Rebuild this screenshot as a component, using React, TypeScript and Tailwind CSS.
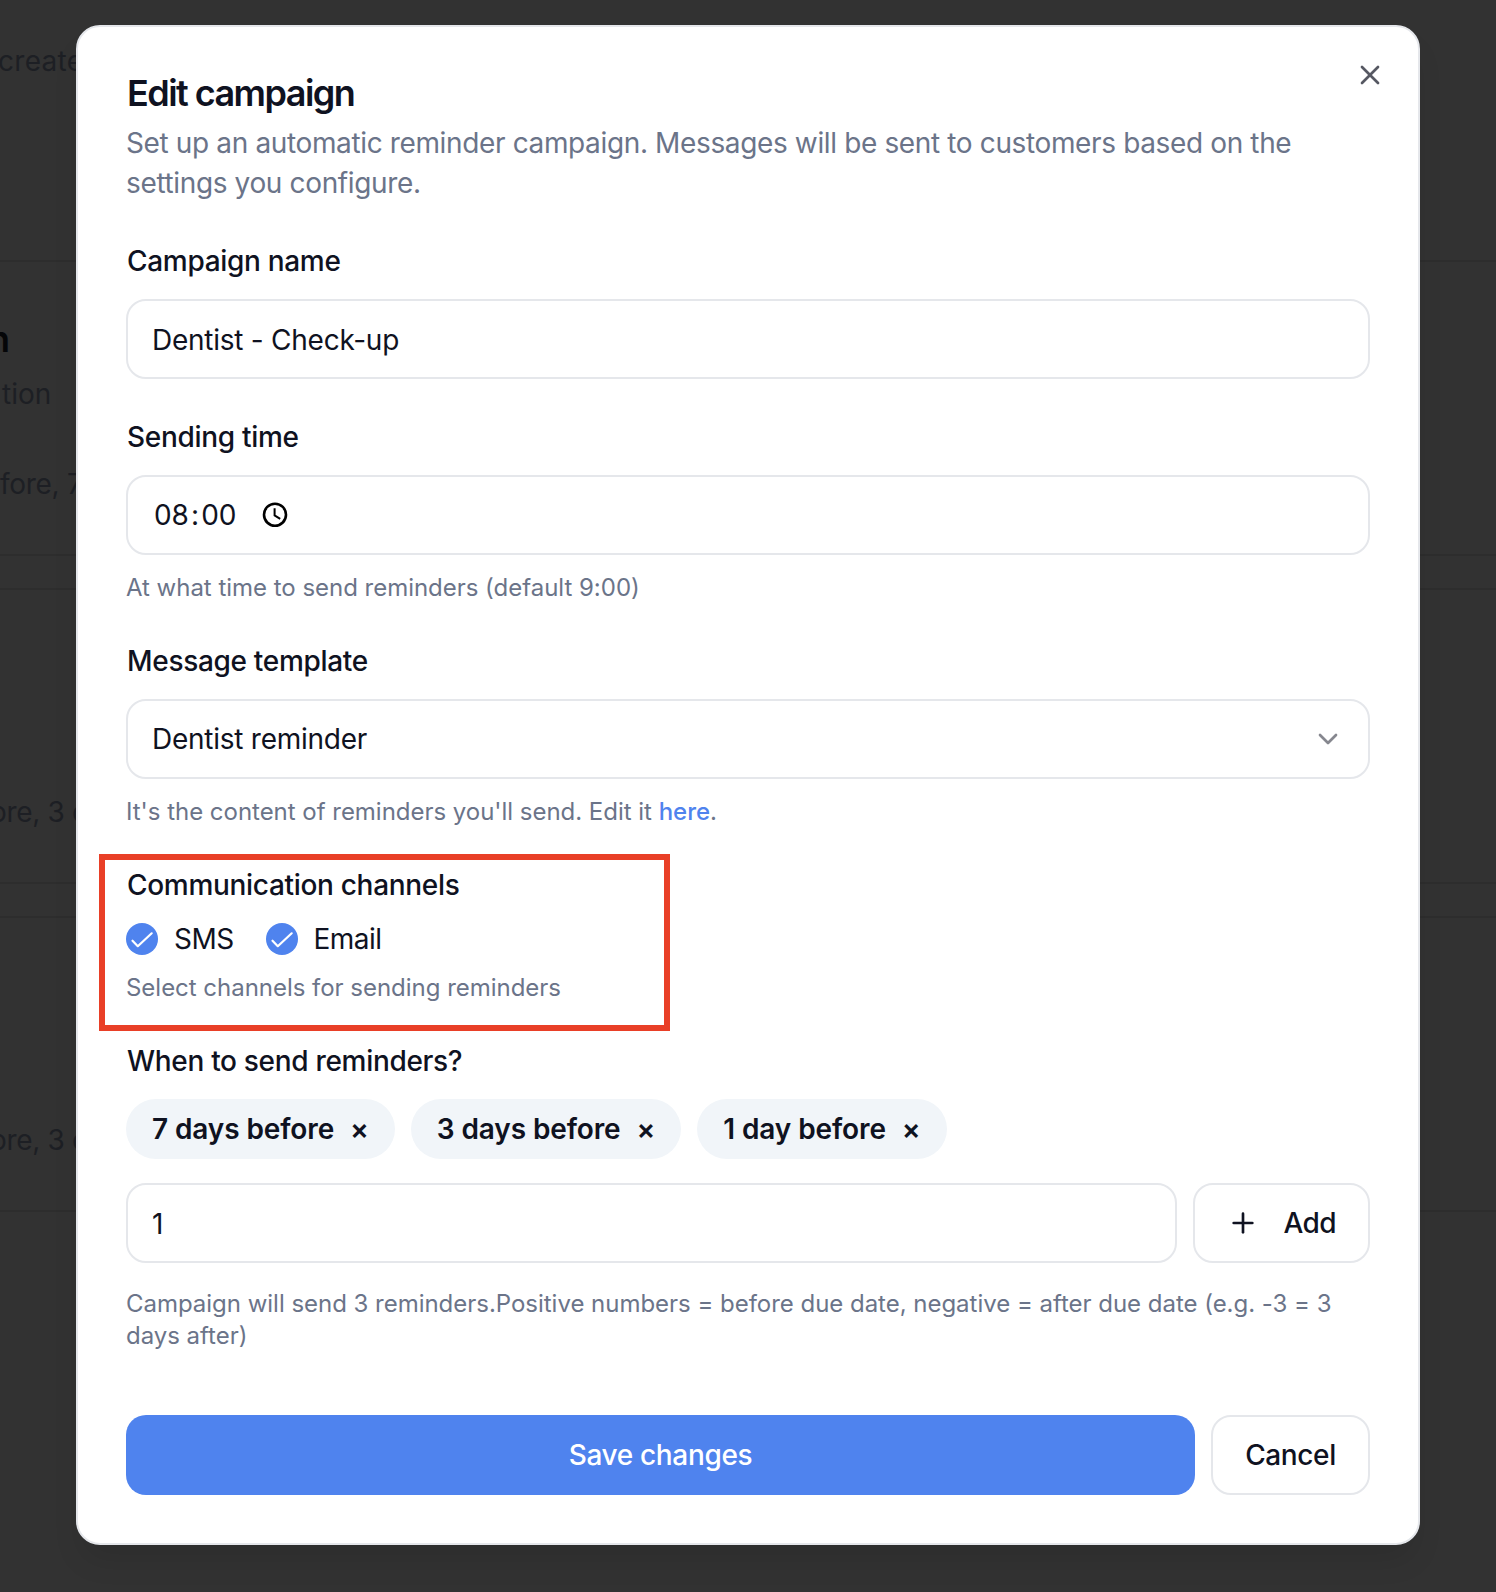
import { useState } from 'react';
import type { ReactNode } from 'react';
import { ChevronDown, Plus, X } from 'lucide-react';

type Channel = 'SMS' | 'Email';

const controlClass =
  'h-20 w-full rounded-[20px] border-2 border-[#e5e7eb] bg-white px-6 text-[28px] tracking-[-0.009em] text-[#0f1221] outline-none';

const hintClass = 'pt-px text-2xl leading-8 tracking-[-0.001em] text-[#6b7489]';

function reminderLabel(days: number): string {
  return `${days} ${days === 1 ? 'day' : 'days'} before`;
}

function Field({ label, hint, children }: { label: string; hint?: ReactNode; children: ReactNode }) {
  return (
    <div className="flex flex-col gap-4">
      <label className="h-12 pt-0.5 pl-px text-[28px] leading-[48px] font-medium tracking-[-0.011em] text-[#0f1221]">
        {label}
      </label>
      {children}
      {hint && <p className={`h-8 ${hintClass}`}>{hint}</p>}
    </div>
  );
}

function ClockIcon() {
  return (
    <svg width="26" height="26" viewBox="0 0 26 26" fill="none" stroke="#000" strokeWidth="2.6">
      <circle cx="13" cy="12.7" r="11" />
      <path d="M12.6 6.2v7.2l5.6 3.4" strokeWidth="2" />
    </svg>
  );
}

function ChannelOption({ name, checked, onToggle }: { name: Channel; checked: boolean; onToggle: () => void }) {
  return (
    <button type="button" onClick={onToggle} className="flex h-8 items-center gap-4">
      <span
        className={`flex size-8 items-center justify-center rounded-full ${
          checked ? 'bg-[#4f83ee]' : 'border-2 border-[#4f83ee]'
        }`}
      >
        {checked && (
          <svg width="32" height="32" viewBox="0 0 32 32" fill="none" stroke="#fff" strokeWidth="2.2">
            <path d="M6.5 17.7l5.3 5.5L25.7 10.3" strokeLinecap="round" strokeLinejoin="round" />
          </svg>
        )}
      </span>
      <span className="text-[28px] leading-8 tracking-[-0.02em] text-[#0f1221]">{name}</span>
    </button>
  );
}

// The page that stays visible behind the overlay
function Backdrop() {
  return (
    <div className="absolute inset-0 overflow-hidden bg-[#323232] text-[28px] leading-10 text-[#1d1f24]">
      <p className="absolute top-[41px] -left-0.5 tracking-[0.01em]">create</p>
      <div className="absolute top-[260px] -left-6 h-[296px] w-[1600px] border-2 border-[#2d2d2d]" />
      <div className="absolute top-[588px] -left-6 h-[296px] w-[1600px] border-2 border-[#2d2d2d]" />
      <div className="absolute top-[916px] -left-6 h-[296px] w-[1600px] border-2 border-[#2d2d2d]" />
      <p className="absolute top-[319px] -left-3 text-[36px] font-semibold text-[#050608]">n</p>
      <p className="absolute top-[374px] left-0.5">tion</p>
      <p className="absolute top-[464px] left-0 tracking-[-0.01em] whitespace-nowrap">fore, 7</p>
      <p className="absolute top-[792px] -left-2.5 tracking-[-0.012em] whitespace-nowrap">ore, 3 d</p>
      <p className="absolute top-[1120px] -left-2.5 tracking-[-0.012em] whitespace-nowrap">ore, 3 d</p>
    </div>
  );
}

export default function App() {
  const [name, setName] = useState('Dentist - Check-up');
  const [channels, setChannels] = useState<Channel[]>(['SMS', 'Email']);
  const [reminders, setReminders] = useState([7, 3, 1]);
  const [days, setDays] = useState('1');

  const toggleChannel = (channel: Channel) => {
    setChannels((prev) => (prev.includes(channel) ? prev.filter((c) => c !== channel) : [...prev, channel]));
  };

  const addReminder = () => {
    const value = Number(days);
    if (!Number.isNaN(value) && !reminders.includes(value)) setReminders([...reminders, value]);
  };

  return (
    <div className="relative h-[1592px] w-[1496px] overflow-hidden font-['Inter',sans-serif]">
      <Backdrop />

      <div className="relative mt-[25px] ml-[76px] flex h-[1520px] w-[1344px] flex-col rounded-3xl border-2 border-[#e5e7eb] bg-white p-12 shadow-[0_20px_30px_-6px_rgba(0,0,0,0.1)]">
        <button type="button" aria-label="Close" className="absolute top-8 right-8 text-[#0f1221] opacity-70">
          <X size={32} />
        </button>

        <div className="flex flex-col gap-3">
          <h2 className="pl-px text-4xl leading-none font-semibold tracking-[-0.043em] text-[#0f1221]">
            Edit campaign
          </h2>
          <p className="text-[28px] leading-10 tracking-[-0.013em] text-[#6b7489]">
            Set up an automatic reminder campaign. Messages will be sent to customers based on the settings you
            configure.
          </p>
        </div>

        <div className="mt-8 flex flex-col gap-8">
          <Field label="Campaign name">
            <input className={`${controlClass} pt-0.5`} value={name} onChange={(e) => setName(e.target.value)} />
          </Field>

          <Field label="Sending time" hint="At what time to send reminders (default 9:00)">
            <div className={`${controlClass} flex items-center gap-[26px]`}>
              <span className="flex pl-0.5">
                08<span className="px-[2.5px]">:</span>00
              </span>
              <ClockIcon />
            </div>
          </Field>

          <Field
            label="Message template"
            hint={
              <>
                It's the content of reminders you'll send. Edit it{' '}
                <a href="#" className="font-medium text-[#4f83ee]">
                  here
                </a>
                .
              </>
            }
          >
            <button type="button" className={`${controlClass} flex items-center justify-between`}>
              Dentist reminder
              <ChevronDown size={32} className="opacity-50" />
            </button>
          </Field>

          <div className="relative">
            <Field label="Communication channels" hint="Select channels for sending reminders">
              <div className="flex gap-8">
                {(['SMS', 'Email'] as const).map((channel) => (
                  <ChannelOption
                    key={channel}
                    name={channel}
                    checked={channels.includes(channel)}
                    onToggle={() => toggleChannel(channel)}
                  />
                ))}
              </div>
            </Field>
            <div className="pointer-events-none absolute -top-[5px] -left-[27px] h-[177px] w-[571px] border-[6px] border-[#e93f27]" />
          </div>

          <div>
            <Field label="When to send reminders?">
              <div className="flex gap-4">
                {reminders.map((value) => (
                  <span
                    key={value}
                    className="flex h-[60px] items-center gap-4 rounded-full bg-[#f1f5f9] px-[26px] text-[28px] font-semibold tracking-[-0.004em] text-[#0f1221]"
                  >
                    {reminderLabel(value)}
                    <button type="button" onClick={() => setReminders(reminders.filter((r) => r !== value))}>
                      ×
                    </button>
                  </span>
                ))}
              </div>
            </Field>
            <div className="mt-6 flex gap-4">
              <input className={`${controlClass} pt-0.5`} value={days} onChange={(e) => setDays(e.target.value)} />
              <button
                type="button"
                onClick={addReminder}
                className="flex h-20 w-[177px] shrink-0 items-center justify-between rounded-[20px] border-2 border-[#e5e7eb] px-8 text-[28px] font-medium tracking-[-0.02em] text-[#0f1221]"
              >
                <Plus size={32} />
                Add
              </button>
            </div>
            <p className={`mt-6 h-16 ${hintClass}`}>
              {`Campaign will send ${reminders.length} reminders.Positive numbers = before due date, negative = after due date (e.g. -3 = 3 days after)`}
            </p>
          </div>
        </div>

        <div className="mt-16 flex gap-4">
          <button
            type="button"
            className="h-20 flex-1 rounded-[20px] bg-[#4f83ee] text-[28px] font-medium tracking-[-0.012em] text-white"
          >
            Save changes
          </button>
          <button
            type="button"
            className="h-20 w-[159px] rounded-[20px] border-2 border-[#e5e7eb] text-[28px] font-medium tracking-[-0.014em] text-[#0f1221]"
          >
            Cancel
          </button>
        </div>
      </div>
    </div>
  );
}
